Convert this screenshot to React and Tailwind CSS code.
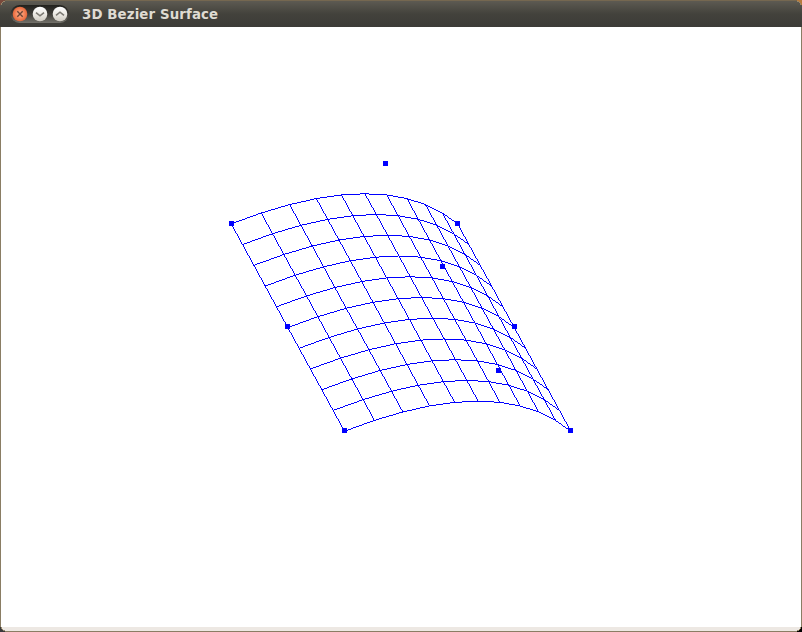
import React from "react";

const STEPS = 10;
const ROWS = [
  [[231.2, 223.8], [385.5, 163.7], [457.6, 223.8]],
  [[287.8, 327.5], [442.1, 267.4], [514.2, 327.5]],
  [[344.4, 431.2], [498.7, 371.1], [570.8, 431.2]],
];

// Centre cells of the control point markers.
const MARKERS = [
  [231, 223], [385, 163], [457, 223],
  [287, 326], [442, 266], [514, 326],
  [344, 430], [498, 370], [570, 430],
];

function bezier(a, b, c, t) {
  const s = 1 - t;
  return [0, 1].map((i) => s * s * a[i] + 2 * s * t * b[i] + t * t * c[i]);
}

function surfacePoint(u, v) {
  const [a, b, c] = ROWS.map((row) => bezier(row[0], row[1], row[2], u));
  return bezier(a, b, c, v);
}

// Non-antialiased line: one cell per step along the major axis.
function rasterLine(p, q, cells) {
  const steep = Math.abs(q[1] - p[1]) > Math.abs(q[0] - p[0]);
  const m = steep ? 1 : 0;
  const n = 1 - m;
  const [s, e] = p[m] <= q[m] ? [p, q] : [q, p];
  const slope = (e[n] - s[n]) / (e[m] - s[m]);
  for (let k = Math.round(s[m]); k < Math.round(e[m]); k++) {
    const o = Math.floor(s[n] + (k + 0.5 - s[m]) * slope);
    cells.add(steep ? `${o} ${k}` : `${k} ${o}`);
  }
}

function wireframe() {
  const cells = new Set();
  for (let i = 0; i <= STEPS; i++) {
    for (let j = 0; j < STEPS; j++) {
      const f = i / STEPS;
      const t0 = j / STEPS;
      const t1 = (j + 1) / STEPS;
      rasterLine(surfacePoint(t0, f), surfacePoint(t1, f), cells);
      rasterLine(surfacePoint(f, t0), surfacePoint(f, t1), cells);
    }
  }
  return [...cells].map((c) => `M${c}h1v1h-1z`).join("");
}

const MESH = wireframe();

function WindowButtons() {
  return (
    <svg width="62" height="22" viewBox="9 3 62 22" className="shrink-0">
      <defs>
        <linearGradient id="well" x1="0" y1="0" x2="0" y2="1">
          <stop offset="0" stopColor="#22211d" />
          <stop offset="0.5" stopColor="#3e3c37" />
          <stop offset="1" stopColor="#73716a" />
        </linearGradient>
        <linearGradient id="light" x1="0" y1="0" x2="0" y2="1">
          <stop offset="0" stopColor="#ffffff" />
          <stop offset="0.5" stopColor="#edeae4" />
          <stop offset="1" stopColor="#cfcac1" />
        </linearGradient>
        <radialGradient id="orange">
          <stop offset="0" stopColor="#fbb493" />
          <stop offset="0.55" stopColor="#f68a60" />
          <stop offset="1" stopColor="#e4663a" />
        </radialGradient>
      </defs>
      <rect x="10.5" y="5" width="58.5" height="18" rx="9" fill="url(#well)" />
      <circle cx="20" cy="14" r="7.3" fill="url(#orange)" />
      <circle cx="40" cy="14" r="7.3" fill="url(#light)" />
      <circle cx="60" cy="14" r="7.3" fill="url(#light)" />
      <path d="M17.3 11.3l5.4 5.4m0-5.4l-5.4 5.4" fill="none" stroke="#6b4536" strokeWidth="1.4" />
      <path d="M36 12.6l4 3.2 4-3.2M56 15.4l4-3.2 4 3.2" fill="none" stroke="#7c7972" strokeWidth="1.6" />
    </svg>
  );
}

function Corner({ className, color }) {
  return (
    <svg width="5" height="5" shapeRendering="crispEdges" className={className}>
      <path d="M0 0h5v1h-2v1h-1v1h-1v2h-1z" fill={color} />
      <path d="M3 1h2v1h-2zM2 2h1v1h-1zM1 3h1v2h-1z" fill="#95876b" />
    </svg>
  );
}

export default function App() {
  return (
    <div className="relative flex h-[632px] w-[802px] flex-col overflow-hidden bg-white">
      <header className="flex h-[27px] shrink-0 items-start border-t border-[#756750] bg-linear-to-b from-[#5d5a52] via-[#43423c] to-[#3c3b37] pl-[9px]">
        <div className="mt-[2px]">
          <WindowButtons />
        </div>
        <h1 className="ml-[11px] mt-0.5 whitespace-nowrap font-['DejaVu_Sans',sans-serif] text-[13.33px] font-bold leading-6 tracking-[0.12px] text-[#dfdbd2]">
          3D Bezier Surface
        </h1>
      </header>
      <main className="h-[605px] border-x border-b border-[#8a7d64] bg-white">
        <svg width="800" height="600" viewBox="1 27 800 600" shapeRendering="crispEdges" className="block">
          <path d={MESH} fill="#0000ff" />
          {MARKERS.map(([x, y]) => (
            <rect key={`${x},${y}`} x={x - 2} y={y - 2} width="5" height="5" fill="#0000ff" />
          ))}
        </svg>
        <div className="h-1 bg-[#ede8e3]" />
      </main>
      <Corner className="absolute left-0 top-0" color="#7a4a3c" />
      <Corner className="absolute right-0 top-0 -scale-x-100" color="#b77a3c" />
      <Corner className="absolute bottom-0 left-0 -scale-y-100" color="#3a393c" />
      <Corner className="absolute bottom-0 right-0 -scale-100" color="#000000" />
    </div>
  );
}
